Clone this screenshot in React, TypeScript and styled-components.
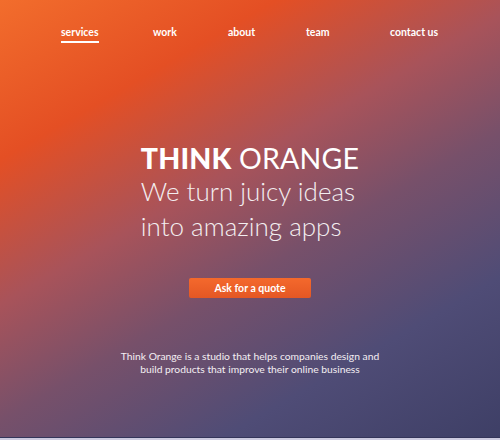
import React from "react";
import styled, { createGlobalStyle } from "styled-components";

const Global = createGlobalStyle`
  html, body { margin: 0; padding: 0; background: #cdcbe0; }
  body { font-family: "Lato", "Open Sans", sans-serif; }
  * { box-sizing: border-box; }
`;

const Hero = styled.section`
  height: 438px;
  width: 500px;
  border-bottom: 1px solid #34355a;
  background: linear-gradient(
    150deg,
    #f26d2c 0%,
    #e44f24 22%,
    #a8535a 42%,
    #77506a 58%,
    #4f4c76 78%,
    #3e3f66 100%
  );
  color: #fff;
  display: flex;
  flex-direction: column;
  align-items: center;
`;

const Nav = styled.nav`
  display: flex;
  align-items: flex-start;
  width: 100%;
  padding: 26px 0 0 61px;
  height: 58px;
`;

const NavItem = styled.a<{ $w: number; $active?: boolean }>`
  width: ${(p) => p.$w}px;
  font-size: 10.5px;
  font-weight: 700;
  color: #fff;
  text-decoration: none;
  white-space: nowrap;
  span {
    display: inline-block;
    padding-bottom: 3px;
    border-bottom: ${(p) => (p.$active ? "2px solid #fff" : "2px solid transparent")};
  }
`;

const Headline = styled.div`
  margin-top: 84px;
  display: flex;
  flex-direction: column;
  align-items: flex-start;
`;

const Title = styled.h1`
  margin: 0;
  font-size: 28.5px;
  line-height: 32px;
  font-weight: 400;
  letter-spacing: 0.2px;
  b { font-weight: 900; }
`;

const Sub = styled.p`
  margin: 0;
  font-size: 26px;
  line-height: 35px;
  font-weight: 300;
  color: #f3eef0;
`;

const Button = styled.button`
  margin-top: 34px;
  width: 122px;
  height: 20px;
  border: none;
  border-radius: 2px;
  background: linear-gradient(180deg, #f4692c, #e45724);
  color: #fff;
  font-family: inherit;
  font-size: 10.5px;
  font-weight: 700;
  padding: 0;
  cursor: pointer;
`;

const Blurb = styled.p`
  margin: 52px 0 0;
  font-size: 10.3px;
  line-height: 13px;
  text-align: center;
  color: #f4eef2;
  font-weight: 400;
`;

export default function App() {
  return (
    <>
      <Global />
      <Hero>
        <Nav>
          <NavItem $w={92} $active>
            <span>services</span>
          </NavItem>
          <NavItem $w={75}>
            <span>work</span>
          </NavItem>
          <NavItem $w={78}>
            <span>about</span>
          </NavItem>
          <NavItem $w={84}>
            <span>team</span>
          </NavItem>
          <NavItem $w={60}>
            <span>contact us</span>
          </NavItem>
        </Nav>
        <Headline>
          <Title>
            <b>THINK</b> ORANGE
          </Title>
          <Sub>We turn juicy ideas</Sub>
          <Sub>into amazing apps</Sub>
        </Headline>
        <Button>Ask for a quote</Button>
        <Blurb>
          Think Orange is a studio that helps companies design and
          <br />
          build products that improve their online business
        </Blurb>
      </Hero>
    </>
  );
}
